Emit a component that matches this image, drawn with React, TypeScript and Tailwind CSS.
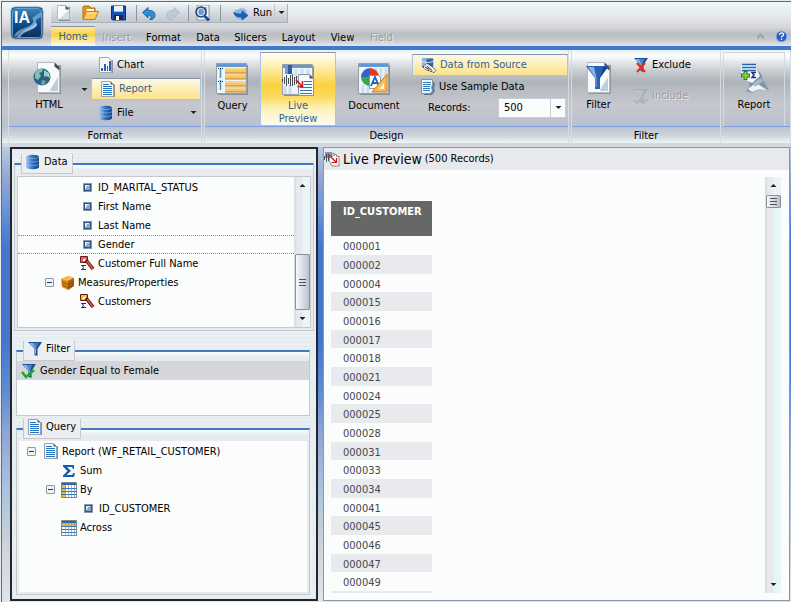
import * as React from 'react';
import clsx from 'clsx';

interface TreeNode {
  label: string;
  icon: React.ReactNode;
  // Tailwind padding for the nesting depth
  indent: string;
  gap: string;
  expanded?: boolean;
  selected?: boolean;
}

const CUSTOMER_IDS = [
  '000001', '000002', '000004', '000015', '000016', '000017', '000018',
  '000021', '000024', '000025', '000028', '000031', '000033', '000034',
  '000041', '000045', '000046', '000047', '000049',
];

const TABS = [
  { label: 'Home', width: 'w-[44px]', active: true },
  { label: 'Insert', width: 'w-[43px]', disabled: true },
  { label: 'Format', width: 'w-[51px]' },
  { label: 'Data', width: 'w-[38px]' },
  { label: 'Slicers', width: 'w-[47px]' },
  { label: 'Layout', width: 'w-[49px]' },
  { label: 'View', width: 'w-[39px]' },
  { label: 'Field', width: 'w-[39px]', disabled: true },
];

/* ---------- Icons ---------- */

function PageIcon() {
  return (
    <svg width="16" height="16" viewBox="0 0 16 16">
      <path d="M3 2h11v14H3z" fill="#8b9198" />
      <path d="M1.5.5h8l4 4v10h-12z" fill="#f8fbfb" stroke="#b2b8bd" />
      <path d="M3 14L13 5v9z" fill="#d3dde6" />
      <path d="M9.5.5l4 4h-4z" fill="#4d555c" />
    </svg>
  );
}

function FolderIcon() {
  return (
    <svg width="17" height="16" viewBox="0 0 17 16">
      <path d="M1 14V2l1-1h5l2 2h4v4" fill="#e8951a" stroke="#b86a10" />
      <path d="M5 4h7v4H4z" fill="#fff" />
      <path d="M1 14.5L4.5 6.5h12L13 14.5z" fill="#ffc95a" stroke="#c47a18" />
      <path d="M5 8h9" stroke="#ffe7a8" />
    </svg>
  );
}

function SaveIcon() {
  return (
    <svg width="15" height="16" viewBox="0 0 15 16">
      <path d="M.5 1h14v14h-13l-1-1z" fill="#1450b4" stroke="#0b2f78" />
      <path d="M3 1h9v6H3z" fill="#e8f2fa" />
      <path d="M3 6h9v1H3z" fill="#9fc4ea" />
      <path d="M3 10h9v5H3z" fill="#1b2840" />
      <path d="M5 11h3v4H5z" fill="#fff" />
    </svg>
  );
}

function UndoIcon({ faded = false }: { faded?: boolean }) {
  return (
    <svg width="14" height="13" viewBox="0 0 14 13" className={clsx(faded && '-scale-x-100')}>
      <path
        d="M.5 5.5l5.500-5v3c4-.5 7 1 7 4.500 0 2-1 3.500-3 4.500H7.500c2.500-1.500 2-4.500-1.500-4.500v3z"
        fill={faded ? '#bccbd8' : '#2a8fd6'}
        stroke={faded ? '#adb9c5' : '#10589a'}
        strokeWidth=".8"
      />
    </svg>
  );
}

function FindIcon() {
  return (
    <svg width="17" height="17" viewBox="0 0 17 17">
      <path d="M3 0h12v15H3z" fill="#f4f8fa" stroke="#8b959e" />
      <path d="M5 3h8M5 5h8M5 7h8M5 9h8" stroke="#2a62a8" />
      <circle cx="7" cy="7" r="5" fill="#cfe4f5" fillOpacity=".7" stroke="#1d3f74" strokeWidth="1.5" />
      <path d="M5 5h4M4 7h6M5 9h4" stroke="#2a62a8" />
      <path d="M10.5 11l4.5 4.5" stroke="#1b4f9e" strokeWidth="3" />
    </svg>
  );
}

function RunIcon() {
  return (
    <svg width="16" height="15" viewBox="0 0 16 15">
      <circle cx="7.500" cy="7.500" r="6.500" fill="#8fb4dc" stroke="#b9cde2" />
      <path d="M2 3c2-2 7-3 10 0-3-1-6-1-8 1z" fill="#e5f1fa" />
      <path d="M1 6c1 2 4 2 8 2V5l6 4.500L9 14v-3C4 11 1 10 1 6z" fill="#1b5fc0" stroke="#123c80" strokeWidth=".6" />
    </svg>
  );
}

function LogoIcon() {
  return (
    <svg width="34" height="34" viewBox="0 0 34 34">
      <defs>
        <linearGradient id="logo" x1="0" y1="0" x2="0" y2="1">
          <stop offset="0" stopColor="#3f83bd" />
          <stop offset=".5" stopColor="#0f4f8e" />
          <stop offset="1" stopColor="#0c2c58" />
        </linearGradient>
      </defs>
      <rect x="1" y="1" width="32" height="32" rx="4" fill="#12305a" stroke="#8fa3b8" />
      <rect x="2.500" y="2.500" width="29" height="29" rx="3" fill="url(#logo)" stroke="#58a0d8" />
      <path d="M4 30c3-6 8-7 13-9s8-5 5-9l9-6v5c-5 2-6 4-4 8-4 6-14 4-20 11z" fill="#7fb0d6" opacity=".75" />
      <path d="M10 31c4-7 14-6 17-12l-1-3c-3 6-12 6-19 15z" fill="#c3d8e8" opacity=".7" />
      <text x="4" y="17" fontFamily="Liberation Sans, sans-serif" fontSize="16" fontWeight="700" fill="#fff">
        IA
      </text>
    </svg>
  );
}

function LargePage({ children }: { children: React.ReactNode }) {
  return (
    <svg width="32" height="32" viewBox="0 0 32 32">
      <path d="M6 3h22v29H6z" fill="#9298a0" />
      <path d="M4.5.5h17l5 5v25h-22z" fill="#f7fafa" stroke="#b5babf" />
      <path d="M17 28l8-13v14h-8z" fill="#bccddd" />
      <path d="M21.5.5l5 5v3l-5-4z" fill="#41474d" />
      {children}
    </svg>
  );
}

function HtmlIcon() {
  return (
    <LargePage>
      <circle cx="9" cy="15" r="8.500" fill="#2b5f8c" />
      <path d="M2 11c2-4 6-5 8-4l-1 3-3 1 2 3-3 4-3-2z" fill="#7fc3a7" />
      <path d="M11 8l5 3 1 5-4-2-2 1z" fill="#9dcdb6" />
      <path d="M9 18l4 1-2 4-3-1z" fill="#67ab97" />
    </LargePage>
  );
}

function FilterPageIcon() {
  return (
    <LargePage>
      <path d="M3 4h22l-8 12v11h-5V16z" fill="#2c62b4" />
      <path d="M5 5h6l2.500 11v9h-1V16z" fill="#8ab2e4" />
      <path d="M20 5h5l-8 11z" fill="#174489" />
    </LargePage>
  );
}

function WindowFrame({ children }: { children: React.ReactNode }) {
  return (
    <svg width="33" height="33" viewBox="0 0 33 33">
      <path d="M2 2h30v30H2z" fill="#8b9199" />
      <path d="M.5.5h30v30H.5z" fill="#eef4f8" stroke="#979ea6" />
      <path d="M1 1h29v3H1z" fill="#6298d4" />
      {children}
    </svg>
  );
}

function QueryIcon() {
  return (
    <WindowFrame>
      <path d="M4.5 5v24" stroke="#4a92c8" strokeWidth="1.5" strokeDasharray="10 2" />
      <path d="M2 5.5h5M2 18.5h5" stroke="#20303c" strokeDasharray="1 1" />
      {[5, 11, 18, 24].map((y) => (
        <g key={y}>
          <path d={`M9 ${y}h21v5H9z`} fill="#f6c566" />
          <path d={`M9 ${y + 5}h21`} stroke="#bd8430" />
          <path d={`M9 ${y + 1}h20`} stroke="#ffe3a4" />
        </g>
      ))}
    </WindowFrame>
  );
}

function LivePreviewIcon() {
  return (
    <WindowFrame>
      <path d="M14 5v9M20 5v7M26 5v6M8 21v9M3 22v8" stroke="#cddde9" strokeWidth="3" />
      <path d="M3 1h7v9H3z" fill="#2a5ea8" />
      <path d="M3 1h3v9H3z" fill="#6d9fd8" />
      <path d="M.5 15v3M2.5 13v7M4.500 11v11M6.500 14v6M8.500 11v11M10.500 10v12M12.500 13v8M14.500 12v8" stroke="#33383e" strokeWidth=".9" />
      <path d="M16.5 10.500h11l4 4v17h-15z" fill="#f6fafc" stroke="#8a9198" />
      <path d="M27.500 10.500l4 4h-4z" fill="#4d545c" />
      <path d="M22 17.500h8M22 20.500h8M18 23.500h12M18 26.500h12M18 29.500h12" stroke="#3675b2" />
      <path d="M14 16l6 6M20.500 17v5.500h-5" stroke="#d0181c" strokeWidth="1.500" fill="none" />
    </WindowFrame>
  );
}

function DocumentIcon() {
  return (
    <WindowFrame>
      <path d="M18 5v9M23 5v9M28 5v9M5 22v8M10 22v8" stroke="#cddde9" strokeWidth="3" />
      <path d="M12 14V5a9 9 0 0 1 9 9z" fill="#e03a26" />
      <path d="M12 14H3a9 9 0 0 1 9-9z" fill="#3366cc" />
      <path d="M12 14H3a9 9 0 0 0 9 9z" fill="#36a84a" />
      <path d="M12 14h9a9 9 0 0 1-9 9z" fill="#2b57bd" />
      <path d="M11.5 12.500h9l2 2v11h-11z" fill="#fff" stroke="#8f98a4" />
      <path d="M13 23l4-9 4 9M14.500 20h5" stroke="#2460b4" strokeWidth="1.800" fill="none" />
      <path d="M14 29L29 11v18z" fill="#f5bd58" stroke="#c47e1c" />
      <path d="M21 26l5-6v6z" fill="#fff7e0" />
    </WindowFrame>
  );
}

function ReportLargeIcon() {
  return (
    <svg width="32" height="32" viewBox="0 0 32 32">
      <path d="M16 4l7 8 2 7-8 7-6-3z" fill="#748aa8" />
      <path d="M14 22l9-7 8 13-9-2-8 5-6-2z" fill="#8295b0" />
      <path d="M10 27l8-6 11 7-8-1-7 3z" fill="#eef3f8" />
      <path d="M15 21l8-5 2 3-8 6z" fill="#a9b9cc" />
      <path d="M3 3h14l5 11-8 7-10-5z" fill="#f3f7fa" />
      <path d="M4 2.500h14M4 5.500h14M4 8.500h14" stroke="#1b69b0" strokeWidth="1.500" />
      <path d="M7.500 9v9M3 13.500h9" stroke="#347f18" strokeWidth="4" />
      <path d="M7.500 10v7M4 13.500h7" stroke="#8ed044" strokeWidth="2" />
      <path d="M18 10.500h-4l2 2.500-2 2.500h4" stroke="#1c2f80" strokeWidth="1.500" fill="none" />
    </svg>
  );
}

function ChartIcon() {
  return (
    <svg width="16" height="17" viewBox="0 0 16 17">
      <path d="M3 3h12v13H3z" fill="#8b9198" />
      <path d="M1.5.5h9l3 3v12h-12z" fill="#f4f8fb" stroke="#a3a9af" />
      <path d="M3 11h2v3H3zM6 7h2v7H6zM9 9h1v5H9zM11 4h2v10h-2z" fill="#2d62ad" />
    </svg>
  );
}

function SheetIcon() {
  return (
    <svg width="16" height="17" viewBox="0 0 16 17">
      <path d="M3 3h12v13H3z" fill="#8b9198" />
      <path d="M1.5.5h9l3 3v12h-12z" fill="#f4f8fb" stroke="#9ba1a8" />
      <path d="M10.5.5l3 3h-3z" fill="#596068" />
      <path d="M3 3.500h6M3 5.500h9M3 7.500h9M3 9.500h9M3 11.500h9M3 13.500h9" stroke="#2573c4" />
    </svg>
  );
}

function DatabaseIcon() {
  return (
    <svg width="16" height="16" viewBox="0 0 16 16">
      <defs>
        <linearGradient id="db" x1="0" x2="1">
          <stop offset="0" stopColor="#a9cdee" />
          <stop offset=".45" stopColor="#3b78c4" />
          <stop offset="1" stopColor="#123f86" />
        </linearGradient>
      </defs>
      <path d="M1 3c0-3 13-3 13 0v10c0 3-13 3-13 0z" fill="url(#db)" />
      <path d="M1 3c1 2 12 2 13 0M1 6.500c1 2 12 2 13 0M1 10c1 2 12 2 13 0" stroke="#9cc4ec" strokeWidth=".6" fill="none" />
    </svg>
  );
}

function SourceIcon() {
  return (
    <svg width="17" height="16" viewBox="0 0 17 16">
      <path d="M1 1h12v9H1z" fill="#2f66b2" />
      <path d="M1 1h5v8H1z" fill="#8fb6e2" />
      <path d="M1 4c4 2 8 2 12 0" stroke="#d5e6f6" fill="none" />
      <path d="M2 10l4-4 5 3 5 5-2 2-9-3z" fill="#f2f2f0" stroke="#26292c" strokeDasharray="2 1" />
      <path d="M6 9l6 5M4 10l5 3" stroke="#26292c" />
    </svg>
  );
}

function SampleIcon() {
  return (
    <svg width="16" height="16" viewBox="0 0 16 16">
      <path d="M3 3h11l1 3-1 3 1 3-3 4H4z" fill="#5d7796" />
      <path d="M1.5.5h11v5l-1 3 1 3-2 3h-9z" fill="#eef6fc" stroke="#7f92a6" />
      <path d="M3 3.500h8M3 5.500h8M3 7.500h7M3 9.500h7M3 11.500h7" stroke="#2f7fc8" />
    </svg>
  );
}

function Funnel({ variant = 'plain' }: { variant?: 'plain' | 'exclude' | 'include' | 'checked' }) {
  const faded = variant === 'include';
  return (
    <svg width="16" height="16" viewBox="0 0 16 16" opacity={faded ? 0.5 : 1}>
      <path d="M1 1h14l-4.500 7v7l-3-1V8z" fill={faded ? '#8fa1b4' : '#1f4f9c'} />
      <path d="M2 2h4l3 6v5l-1-.5V8z" fill={faded ? '#c5d0da' : '#8eb4e4'} />
      <path d="M6 2h5L9 8z" fill={faded ? '#b4c0cc' : '#4d83cc'} />
      {variant === 'exclude' && <path d="M4 6l8 9M12 6l-8 9" stroke="#e32a18" strokeWidth="2" />}
      {faded && <path d="M1 12l3 3 5-5M7 12l3 3 5-4" stroke="#94aa94" strokeWidth="2" fill="none" />}
      {variant === 'checked' && <path d="M1 9l4 5 8-7" stroke="#16b216" strokeWidth="2.500" fill="none" />}
    </svg>
  );
}

function FieldIcon() {
  return (
    <svg width="9" height="9" viewBox="0 0 9 9">
      <path d="M.5.5h8v8h-8z" fill="#33547e" stroke="#8195ad" />
      <path d="M2 2h5L2 7z" fill="#e4eef8" />
      <path d="M4 3h3v4H3z" fill="#86a8cc" />
    </svg>
  );
}

function MeasureIcon({ color }: { color: string }) {
  return (
    <svg width="15" height="15" viewBox="0 0 15 15">
      <path d="M.5.5h7v6h-7z" fill={color} stroke="#6b1d1d" />
      <path d="M3 3h3v2H3z" fill="#fff" />
      <path d="M6 4l7 9" stroke="#4c1210" strokeWidth="3.500" />
      <path d="M7 5l6 8" stroke="#e8503c" strokeWidth="1.800" />
      <path d="M6 9.500H1.500L4 11.500l-2.500 2H6" stroke="#1c2f70" fill="none" />
    </svg>
  );
}

function CubesIcon() {
  return (
    <svg width="14" height="15" viewBox="0 0 14 15">
      <path d="M0 4l7-3 6 2v8l-6 4-6-3z" fill="#d98716" />
      <path d="M0 4l7-3 6 2-6 3z" fill="#f8ba4c" />
      <path d="M7 6l6-3v8l-6 4z" fill="#a9600f" />
      <path d="M1 7l6 2.500 6-3M1 9.500l6 3 6-3.500" stroke="#6b3d0c" strokeWidth=".7" fill="none" />
    </svg>
  );
}

function SigmaIcon() {
  return (
    <svg width="14" height="14" viewBox="0 0 14 14">
      <path d="M1 1h11v4h-1L10 3H5l4 4-4.500 4H10l1.500-2H13l-1 4H1v-1.500L5.500 7 1 2.500z" fill="#165cae" />
    </svg>
  );
}

function GridIcon({ across = false }: { across?: boolean }) {
  return (
    <svg width="16" height="16" viewBox="0 0 16 16">
      <path d="M.5.5h15v15H.5z" fill="#fff" stroke="#7e868e" />
      <path d="M1 1h14v2H1z" fill="#2c65b4" />
      <path d={across ? 'M1 3h14v4H1z' : 'M1 3h4v12H1z'} fill="#f9b428" />
      <path d="M1 6.500h14M1 9.500h14M1 12.500h14" stroke="#2f72b4" />
      <path d="M4.500 3v12M7.500 3v12M10.500 3v12M13.500 3v12" stroke="#6a9cca" strokeWidth=".7" />
    </svg>
  );
}

function LiveHandIcon() {
  return (
    <svg width="17" height="16" viewBox="0 0 17 16">
      <path d="M1 1h7v6H1z" fill="#6f9bd0" />
      <path d="M.5 5v4M2.500 3v8M4.500 5v5" stroke="#2a3038" strokeWidth=".8" />
      <path d="M6 5l2 1V3l2-1v3l2-2 1 3 2-1v10H8L5 10z" fill="#fafafa" stroke="#6a7077" strokeWidth=".8" />
      <path d="M4 3l8 8M12.500 7v4.500h-5" stroke="#c8141c" strokeWidth="1.200" fill="none" />
    </svg>
  );
}

function Caret({ up = false }: { up?: boolean }) {
  return (
    <svg width="7" height="4" viewBox="0 0 7 4">
      <path d={up ? 'M.5 4h6L3.500 1z' : 'M.5 0h6L3.500 3z'} fill="#1d2024" />
    </svg>
  );
}

/* ---------- Ribbon ---------- */

function RibbonGroup({ title, className, children }: { title?: string; className: string; children: React.ReactNode }) {
  return (
    <section className={clsx('flex flex-col border-r border-[#d8dce2]', className)}>
      <div className="flex h-[77px] shrink-0 border-b border-[#7f9fdc]">{children}</div>
      <h2 className="flex h-[16px] items-end justify-center leading-[14px]">{title}</h2>
    </section>
  );
}

function LargeButton({ label, icon, className }: { label: string; icon: React.ReactNode; className: string }) {
  return (
    <button className={clsx('flex shrink-0 flex-col items-center leading-[13px]', className)}>
      <span className="flex h-[36px] items-start">{icon}</span>
      <span>{label}</span>
    </button>
  );
}

function SmallButton({ label, icon, className }: { label: string; icon: React.ReactNode; className?: string }) {
  return (
    <button className={clsx('flex h-[22px] items-center gap-[3px] px-2 text-left', className)}>
      <span className="flex w-4 shrink-0 justify-center">{icon}</span>
      {label}
    </button>
  );
}

const HIGHLIGHT =
  'border border-[#a9c4e6] border-t-[#8a95a5] bg-[linear-gradient(#fbf8ee,#fdf0b8_45%,#fbe28c)] text-[#36618f]';

function Ribbon() {
  return (
    <div className="flex h-[97px] shrink-0 border-t-4 border-[#4377ce] bg-[linear-gradient(#e4f4f6_0px,#fafcfc_6px,#e2e4e7_13px,#c6cacf_22px,#acb3b9_32px,#b9bdc2_40px,#c6c8ce_55px,#b9c0cf_75px,#bcc5d4_78px,#cccfd7_84px,#e6f2f4_92px)] pl-[6px]">
      <RibbonGroup title="Format" className="w-[194px] border-l">
        <LargeButton label="HTML" icon={<HtmlIcon />} className="w-[80px] pt-3" />
        <button aria-label="HTML options" className="-ml-2 flex w-[10px] shrink-0 items-center pt-1">
          <Caret />
        </button>
        <div className="flex flex-1 flex-col gap-[2px] pt-1">
          <SmallButton label="Chart" icon={<ChartIcon />} className="pl-[7px]" />
          <SmallButton label="Report" icon={<SheetIcon />} className={HIGHLIGHT} />
          <div className="flex items-center justify-between pr-1">
            <SmallButton label="File" icon={<DatabaseIcon />} className="pl-[7px]" />
            <Caret />
          </div>
        </div>
      </RibbonGroup>

      <RibbonGroup title="Design" className="ml-[2px] w-[365px] border-l">
        <LargeButton label="Query" icon={<QueryIcon />} className="w-[55px] pt-[13px]" />
        <LargeButton
          label="Live Preview"
          icon={<LivePreviewIcon />}
          className="mt-[2px] w-[76px] border border-[#a9c4e6] border-t-[#8a95a5] bg-[linear-gradient(#fffdf4,#fff3c0_15%,#fbd23e_45%,#fbd95c_60%,#fdf3bc_78%,#fbfaf4)] px-3 pt-[11px] text-[#36618f]"
        />
        <LargeButton label="Document" icon={<DocumentIcon />} className="w-[76px] pt-[13px]" />
        <div className="flex flex-1 flex-col pt-1">
          <SmallButton label="Data from Source" icon={<SourceIcon />} className={clsx('pr-0', HIGHLIGHT)} />
          <SmallButton label="Use Sample Data" icon={<SampleIcon />} />
          <div className="flex items-start gap-[2px] pl-4">
            <label htmlFor="records" className="w-[68px] pt-[3px] leading-[13px]">
              Records:
            </label>
            <div className="flex h-[20px] w-[68px] border border-[#c6cdd6] bg-[#fbfcfc]">
              <input id="records" defaultValue="500" className="w-0 flex-1 bg-transparent pl-[5px] outline-none" />
              <button
                aria-label="Choose record limit"
                className="flex w-[15px] items-center justify-center border-l border-[#c6cdd6]"
              >
                <Caret />
              </button>
            </div>
          </div>
        </div>
      </RibbonGroup>

      <RibbonGroup title="Filter" className="ml-[2px] w-[150px] border-l">
        <LargeButton label="Filter" icon={<FilterPageIcon />} className="w-[53px] pt-3" />
        <div className="flex flex-1 flex-col gap-[9px] pt-1">
          <SmallButton label="Exclude" icon={<Funnel variant="exclude" />} />
          <SmallButton
            label="Include"
            icon={<Funnel variant="include" />}
            className="text-[#999da4] [text-shadow:1px_1px_0_#e2e5e8]"
          />
        </div>
      </RibbonGroup>

      <RibbonGroup className="ml-[2px] flex-1">
        <LargeButton
          label="Report"
          icon={<ReportLargeIcon />}
          className="mt-[2px] w-[62px] border border-b-0 border-[#d3d9e2] pt-[9px]"
        />
      </RibbonGroup>
    </div>
  );
}

function ToolbarDivider() {
  return <span className="h-4 w-px bg-[#8e959d]" />;
}

function Header() {
  return (
    <header className="flex h-[44px] shrink-0 bg-[linear-gradient(#f4f8f8_0px,#e6f1f3_7px,#e8eaee_13px,#dddfe2_20px,#d2d4d7_26px,#babec4_32px,#c6cacf_38px,#e4e6e8_44px)]">
      <button aria-label="Application menu" className="flex w-[49px] items-start pt-1 pl-2">
        <LogoIcon />
      </button>
      <div className="flex min-w-0 flex-1 flex-col">
        <div className="mt-[2px] flex h-[19px] w-[237px] items-center border-r border-b border-[#a8b0ba] bg-[linear-gradient(#e9f3f5,#d5d9df,#c2c8d0)] pl-[5px]">
          <button aria-label="New" className="w-[26px]"><PageIcon /></button>
          <button aria-label="Open" className="w-[29px]"><FolderIcon /></button>
          <button aria-label="Save" className="w-[25px]"><SaveIcon /></button>
          <ToolbarDivider />
          <button aria-label="Undo" className="ml-[5px] w-[24px]"><UndoIcon /></button>
          <button aria-label="Redo" className="w-[22px]"><UndoIcon faded /></button>
          <ToolbarDivider />
          <button aria-label="Find" className="ml-[5px] w-[26px]"><FindIcon /></button>
          <ToolbarDivider />
          <button className="ml-3 flex w-[41px] items-center gap-1"><RunIcon />Run</button>
          <button aria-label="Run options" className="flex h-full flex-1 items-center justify-center border-l border-[#c2c7ce]">
            <Caret />
          </button>
        </div>
        <nav className="mt-auto flex h-[20px] items-center">
          {TABS.map((tab) => (
            <button
              key={tab.label}
              className={clsx(
                'h-full shrink-0 border-t text-center',
                tab.width,
                tab.active
                  ? 'border-[#8a95a5] bg-[linear-gradient(#fbe9a0,#fbd03c_40%,#fbe694_65%,#fdfaec)] text-[#36618f]'
                  : 'border-transparent pt-[2px]',
                tab.disabled && 'text-[#999da4] [text-shadow:1px_1px_0_#e6e8eb]',
              )}
            >
              {tab.label}
            </button>
          ))}
          <button aria-label="Collapse ribbon" className="mr-[10px] ml-auto">
            <svg width="9" height="6" viewBox="0 0 9 6">
              <path d="M1 4l3.500-3L8 4M1 6l3.500-3L8 6" stroke="#7b828a" strokeWidth=".8" fill="none" />
            </svg>
          </button>
          <button aria-label="Help" className="mr-[3px]">
            <svg width="13" height="13" viewBox="0 0 13 13">
              <circle cx="6.500" cy="6.500" r="5.500" fill="#2a5fc4" stroke="#a3bce4" />
              <path d="M4.500 5c0-3 4-2.500 4-.5 0 1.500-2 1.500-2 3M6.500 8.500v1.500" stroke="#fff" strokeWidth="1.300" fill="none" />
            </svg>
          </button>
        </nav>
      </div>
    </header>
  );
}

/* ---------- Side panels ---------- */

function Panel({ title, icon, className, children }: { title: string; icon: React.ReactNode; className?: string; children: React.ReactNode }) {
  return (
    <section className={clsx('flex flex-col', className)}>
      <div className="flex h-[20px] shrink-0 items-end">
        <span className="h-[11px] w-[7px] border-t-2 border-l border-[#c5c9ce] border-t-[#4377c4]" />
        <h2 className="flex h-[20px] items-center gap-[3px] border border-t-0 border-[#c5c9ce] bg-[#eceef1] pr-1 pb-[3px] pl-[3px]">
          {icon}
          {title}
        </h2>
        <span className="h-[11px] flex-1 border-t-2 border-r border-[#c5c9ce] border-t-[#4377c4] bg-[linear-gradient(#fbfcfc,#e8f4f6_40%,#e9eaee_60%)]" />
      </div>
      <div className="flex min-h-0 flex-1 flex-col border border-t-0 border-[#c5c9ce] bg-[#e9eaee]">{children}</div>
    </section>
  );
}

function TreeToggle() {
  return (
    <button aria-label="Collapse" className="flex size-[9px] shrink-0 items-center justify-center rounded-[1px] border border-[#8a9aaa] bg-[#f0f4f6]">
      <span className="h-px w-[5px] bg-[#26384c]" />
    </button>
  );
}

function Tree({ nodes }: { nodes: TreeNode[] }) {
  return (
    <ul className="min-w-0 flex-1 pt-px">
      {nodes.map((node) => (
        <li
          key={node.label}
          className={clsx(
            'flex h-[19px] items-center border-y border-dotted',
            node.indent,
            node.gap,
            node.selected ? 'border-[#888d94]' : 'border-transparent',
          )}
        >
          {node.expanded && <TreeToggle />}
          {node.icon}
          <span className="whitespace-nowrap">{node.label}</span>
        </li>
      ))}
    </ul>
  );
}

function ScrollTrack({ thumb, children }: { thumb: string; children?: React.ReactNode }) {
  return (
    <div className="flex w-[16px] shrink-0 flex-col items-center bg-[linear-gradient(90deg,#d9dfe4_1px,#e8e9ee_3px,#e8e9ee_8px,#e9f4f5_9px)] py-[6px]">
      <Caret up />
      {children}
      <span
        className={clsx(
          'flex w-[15px] flex-col items-center justify-center gap-[2px] rounded-[1px] border border-[#8d9299] bg-[linear-gradient(90deg,#f6f8f9,#d5d9e0_60%,#b8c0cd)]',
          thumb,
        )}
      >
        <i className="h-px w-[7px] bg-[#4e545b]" />
        <i className="h-px w-[7px] bg-[#4e545b]" />
        <i className="h-px w-[7px] bg-[#4e545b]" />
      </span>
      <span className="mt-auto">
        <Caret />
      </span>
    </div>
  );
}

const DATA_NODES: TreeNode[] = [
  { label: 'ID_MARITAL_STATUS', icon: <FieldIcon />, indent: 'pl-[65px]', gap: 'gap-[6px]' },
  { label: 'First Name', icon: <FieldIcon />, indent: 'pl-[65px]', gap: 'gap-[6px]' },
  { label: 'Last Name', icon: <FieldIcon />, indent: 'pl-[65px]', gap: 'gap-[6px]' },
  { label: 'Gender', icon: <FieldIcon />, indent: 'pl-[65px]', gap: 'gap-[6px]', selected: true },
  { label: 'Customer Full Name', icon: <MeasureIcon color="#e86458" />, indent: 'pl-[62px]', gap: 'gap-[3px]' },
  { label: 'Measures/Properties', icon: <CubesIcon />, indent: 'pl-[27px]', gap: 'gap-[3px] [&>button]:mr-1', expanded: true },
  { label: 'Customers', icon: <MeasureIcon color="#d4cc20" />, indent: 'pl-[62px]', gap: 'gap-[3px]' },
];

const QUERY_NODES: TreeNode[] = [
  { label: 'Report (WF_RETAIL_CUSTOMER)', icon: <SheetIcon />, indent: 'pl-[8px]', gap: 'gap-[3px] [&>button]:mr-1', expanded: true },
  { label: 'Sum', icon: <SigmaIcon />, indent: 'pl-[43px]', gap: 'gap-[4px]' },
  { label: 'By', icon: <GridIcon />, indent: 'pl-[27px]', gap: 'gap-[3px] [&>button]:mr-[3px]', expanded: true },
  { label: 'ID_CUSTOMER', icon: <FieldIcon />, indent: 'pl-[65px]', gap: 'gap-[6px]' },
  { label: 'Across', icon: <GridIcon across />, indent: 'pl-[42px]', gap: 'gap-[3px]' },
];

function Sidebar() {
  return (
    <aside className="flex w-[308px] shrink-0 flex-col border-2 border-[#24262c] bg-[repeating-linear-gradient(#e8eaed_0px,#e8eaed_2px,#e6f1f3_2px,#e6f1f3_4px)] px-[2px] pt-[5px] pb-1">
      <Panel title="Data" icon={<DatabaseIcon />} className="h-[177px] shrink-0">
        <div className="mx-[2px] mt-[2px] mb-[2px] flex min-h-0 flex-1 border border-[#c5c9ce] bg-[#fbfcfc]">
          <Tree nodes={DATA_NODES} />
          <ScrollTrack thumb="h-[56px]">
            <span className="h-[67px] shrink-0" />
          </ScrollTrack>
        </div>
      </Panel>
      <Panel title="Filter" icon={<Funnel />} className="mt-[10px] mr-1 ml-[2px] h-[75px] shrink-0">
        <div className="flex-1 bg-[#fbfcfc]">
          <button className="flex h-[19px] w-full items-center gap-[3px] bg-[#d5d6da] pl-1">
            <Funnel variant="checked" />
            Gender Equal to Female
          </button>
        </div>
      </Panel>
      <Panel title="Query" icon={<SheetIcon />} className="mt-[3px] mr-1 ml-[2px] min-h-0 flex-1">
        <div className="mx-[2px] mt-[2px] mb-[2px] flex min-h-0 flex-1 bg-[#fbfcfc]">
          <Tree nodes={QUERY_NODES} />
        </div>
      </Panel>
    </aside>
  );
}

/* ---------- Live preview ---------- */

function LivePreview() {
  return (
    <main className="flex min-w-0 flex-1 flex-col border border-[#8e95a6] bg-[#fbfcfc]">
      <h1 className="flex h-[22px] shrink-0 items-center gap-[2px] bg-[#e8e9ed]">
        <LiveHandIcon />
        <span className="pr-px text-[14px]">Live Preview</span>
        <span>(500 Records)</span>
      </h1>
      <div className="mt-[7px] mb-[7px] flex min-h-0 flex-1 pr-2 pl-[7px]">
        <div className="min-w-0 flex-1 overflow-hidden pt-6">
          <table className="w-[101px] border-collapse">
            <thead>
              <tr className="h-[35px] bg-[#666866] text-white">
                <th scope="col" className="pt-[3px] pl-3 text-left align-top font-bold whitespace-nowrap">
                  ID_CUSTOMER
                </th>
              </tr>
            </thead>
            <tbody className="text-[#45484c]">
              {CUSTOMER_IDS.map((id) => (
                <tr key={id} className="h-[19px] nth-[3n]:h-[18px] even:bg-[#e9eaee]">
                  <td className="p-0 pt-[3px] pl-3 leading-[14px]">{id}</td>
                </tr>
              ))}
              {/* top edge of the next band */}
              <tr aria-hidden="true" className="h-1 bg-[#e9eaee]">
                <td className="p-0" />
              </tr>
            </tbody>
          </table>
        </div>
        <ScrollTrack thumb="mt-2 h-[13px]" />
      </div>
    </main>
  );
}

export default function App() {
  return (
    <div className="flex h-screen min-h-[400px] flex-col overflow-hidden border-t border-l border-[#e8ecee] bg-white font-['DejaVu_Sans_Condensed','Noto_Sans',sans-serif] text-[11px] leading-[16px] text-black">
      <div className="flex min-h-0 flex-1 flex-col border-t border-l border-[#666b70]">
        <Header />
        <Ribbon />
        <div className="h-[4px] shrink-0 bg-[#d5d8dc]" />
        <div className="flex min-h-0 flex-1 gap-[5px] bg-[linear-gradient(#b6cde0,#98abd2_6%,#6a92d8_14%,#4377ce_22%,#4377ce_43%,#5f8dd4_54%,#8fa6d6_63%,#a6c3de_75%,#cfd4da_88%,#dfe6ec)] pb-px pl-2 pr-px">
          <Sidebar />
          <LivePreview />
        </div>
      </div>
    </div>
  );
}
